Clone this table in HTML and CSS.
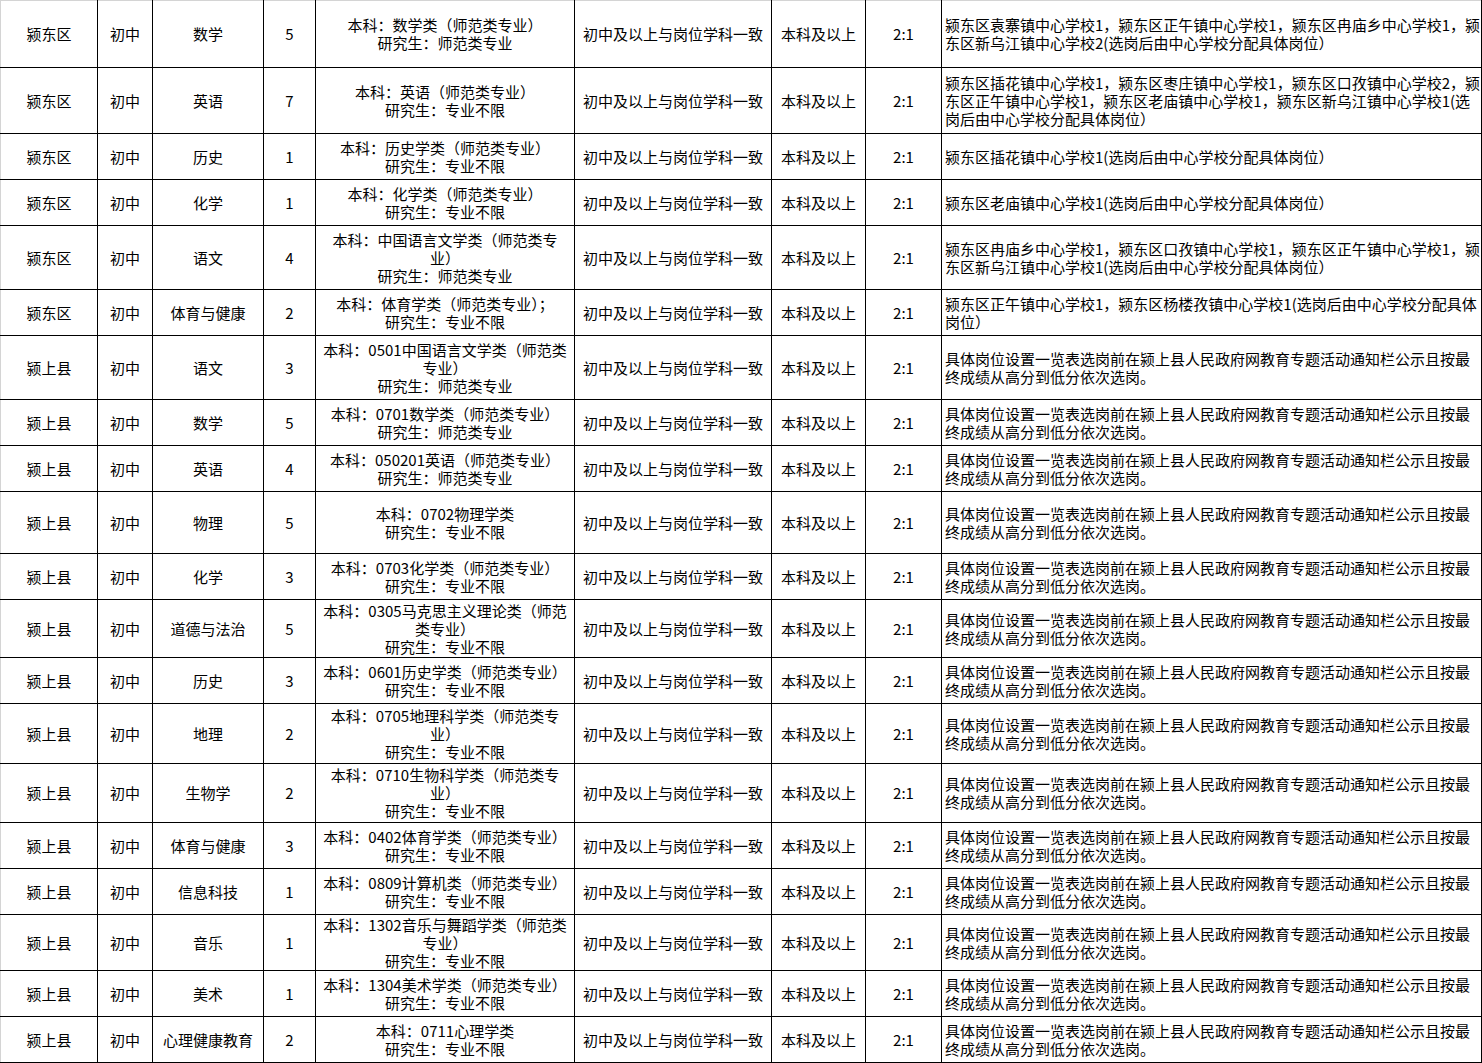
FILE: index.html
```html
<!DOCTYPE html>
<html lang="zh-CN">
<head>
<meta charset="utf-8">
<title>岗位表</title>
<link rel="stylesheet" href="styles.css">
</head>
<body>
<table class="sheet">
<colgroup>
<col class="c1"><col class="c2"><col class="c3"><col class="c4"><col class="c5"><col class="c6"><col class="c7"><col class="c8"><col class="c9">
</colgroup>
<tbody>
<tr class="h67"><td>颍东区</td><td>初中</td><td>数学</td><td>5</td><td>本科：数学类（师范类专业）<br>研究生：师范类专业</td><td>初中及以上与岗位学科一致</td><td>本科及以上</td><td>2:1</td><td class="note">颍东区袁寨镇中心学校1，颍东区正午镇中心学校1，颍东区冉庙乡中心学校1，颍<br>东区新乌江镇中心学校2(选岗后由中心学校分配具体岗位）</td></tr>
<tr class="h66"><td>颍东区</td><td>初中</td><td>英语</td><td>7</td><td>本科：英语（师范类专业）<br>研究生：专业不限</td><td>初中及以上与岗位学科一致</td><td>本科及以上</td><td>2:1</td><td class="note">颍东区插花镇中心学校1，颍东区枣庄镇中心学校1，颍东区口孜镇中心学校2，颍<br>东区正午镇中心学校1，颍东区老庙镇中心学校1，颍东区新乌江镇中心学校1(选<br>岗后由中心学校分配具体岗位）</td></tr>
<tr class="h46"><td>颍东区</td><td>初中</td><td>历史</td><td>1</td><td>本科：历史学类（师范类专业）<br>研究生：专业不限</td><td>初中及以上与岗位学科一致</td><td>本科及以上</td><td>2:1</td><td class="note">颍东区插花镇中心学校1(选岗后由中心学校分配具体岗位）</td></tr>
<tr class="h46"><td>颍东区</td><td>初中</td><td>化学</td><td>1</td><td>本科：化学类（师范类专业）<br>研究生：专业不限</td><td>初中及以上与岗位学科一致</td><td>本科及以上</td><td>2:1</td><td class="note">颍东区老庙镇中心学校1(选岗后由中心学校分配具体岗位）</td></tr>
<tr class="h64"><td>颍东区</td><td>初中</td><td>语文</td><td>4</td><td>本科：中国语言文学类（师范类专<br>业）<br>研究生：师范类专业</td><td>初中及以上与岗位学科一致</td><td>本科及以上</td><td>2:1</td><td class="note">颍东区冉庙乡中心学校1，颍东区口孜镇中心学校1，颍东区正午镇中心学校1，颍<br>东区新乌江镇中心学校1(选岗后由中心学校分配具体岗位）</td></tr>
<tr class="h46"><td>颍东区</td><td>初中</td><td>体育与健康</td><td>2</td><td>本科：体育学类（师范类专业）；<br>研究生：专业不限</td><td>初中及以上与岗位学科一致</td><td>本科及以上</td><td>2:1</td><td class="note">颍东区正午镇中心学校1，颍东区杨楼孜镇中心学校1(选岗后由中心学校分配具体<br>岗位）</td></tr>
<tr class="h64"><td>颍上县</td><td>初中</td><td>语文</td><td>3</td><td>本科：0501中国语言文学类（师范类<br>专业）<br>研究生：师范类专业</td><td>初中及以上与岗位学科一致</td><td>本科及以上</td><td>2:1</td><td class="note">具体岗位设置一览表选岗前在颍上县人民政府网教育专题活动通知栏公示且按最<br>终成绩从高分到低分依次选岗。</td></tr>
<tr class="h46"><td>颍上县</td><td>初中</td><td>数学</td><td>5</td><td>本科：0701数学类（师范类专业）<br>研究生：师范类专业</td><td>初中及以上与岗位学科一致</td><td>本科及以上</td><td>2:1</td><td class="note">具体岗位设置一览表选岗前在颍上县人民政府网教育专题活动通知栏公示且按最<br>终成绩从高分到低分依次选岗。</td></tr>
<tr class="h46"><td>颍上县</td><td>初中</td><td>英语</td><td>4</td><td>本科：050201英语（师范类专业）<br>研究生：师范类专业</td><td>初中及以上与岗位学科一致</td><td>本科及以上</td><td>2:1</td><td class="note">具体岗位设置一览表选岗前在颍上县人民政府网教育专题活动通知栏公示且按最<br>终成绩从高分到低分依次选岗。</td></tr>
<tr class="h62"><td>颍上县</td><td>初中</td><td>物理</td><td>5</td><td>本科：0702物理学类<br>研究生：专业不限</td><td>初中及以上与岗位学科一致</td><td>本科及以上</td><td>2:1</td><td class="note">具体岗位设置一览表选岗前在颍上县人民政府网教育专题活动通知栏公示且按最<br>终成绩从高分到低分依次选岗。</td></tr>
<tr class="h46"><td>颍上县</td><td>初中</td><td>化学</td><td>3</td><td>本科：0703化学类（师范类专业）<br>研究生：专业不限</td><td>初中及以上与岗位学科一致</td><td>本科及以上</td><td>2:1</td><td class="note">具体岗位设置一览表选岗前在颍上县人民政府网教育专题活动通知栏公示且按最<br>终成绩从高分到低分依次选岗。</td></tr>
<tr class="h58"><td>颍上县</td><td>初中</td><td>道德与法治</td><td>5</td><td>本科：0305马克思主义理论类（师范<br>类专业）<br>研究生：专业不限</td><td>初中及以上与岗位学科一致</td><td>本科及以上</td><td>2:1</td><td class="note">具体岗位设置一览表选岗前在颍上县人民政府网教育专题活动通知栏公示且按最<br>终成绩从高分到低分依次选岗。</td></tr>
<tr class="h46"><td>颍上县</td><td>初中</td><td>历史</td><td>3</td><td>本科：0601历史学类（师范类专业）<br>研究生：专业不限</td><td>初中及以上与岗位学科一致</td><td>本科及以上</td><td>2:1</td><td class="note">具体岗位设置一览表选岗前在颍上县人民政府网教育专题活动通知栏公示且按最<br>终成绩从高分到低分依次选岗。</td></tr>
<tr class="h60"><td>颍上县</td><td>初中</td><td>地理</td><td>2</td><td>本科：0705地理科学类（师范类专<br>业）<br>研究生：专业不限</td><td>初中及以上与岗位学科一致</td><td>本科及以上</td><td>2:1</td><td class="note">具体岗位设置一览表选岗前在颍上县人民政府网教育专题活动通知栏公示且按最<br>终成绩从高分到低分依次选岗。</td></tr>
<tr class="h59"><td>颍上县</td><td>初中</td><td>生物学</td><td>2</td><td>本科：0710生物科学类（师范类专<br>业）<br>研究生：专业不限</td><td>初中及以上与岗位学科一致</td><td>本科及以上</td><td>2:1</td><td class="note">具体岗位设置一览表选岗前在颍上县人民政府网教育专题活动通知栏公示且按最<br>终成绩从高分到低分依次选岗。</td></tr>
<tr class="h46"><td>颍上县</td><td>初中</td><td>体育与健康</td><td>3</td><td>本科：0402体育学类（师范类专业）<br>研究生：专业不限</td><td>初中及以上与岗位学科一致</td><td>本科及以上</td><td>2:1</td><td class="note">具体岗位设置一览表选岗前在颍上县人民政府网教育专题活动通知栏公示且按最<br>终成绩从高分到低分依次选岗。</td></tr>
<tr class="h46"><td>颍上县</td><td>初中</td><td>信息科技</td><td>1</td><td>本科：0809计算机类（师范类专业）<br>研究生：专业不限</td><td>初中及以上与岗位学科一致</td><td>本科及以上</td><td>2:1</td><td class="note">具体岗位设置一览表选岗前在颍上县人民政府网教育专题活动通知栏公示且按最<br>终成绩从高分到低分依次选岗。</td></tr>
<tr class="h56"><td>颍上县</td><td>初中</td><td>音乐</td><td>1</td><td>本科：1302音乐与舞蹈学类（师范类<br>专业）<br>研究生：专业不限</td><td>初中及以上与岗位学科一致</td><td>本科及以上</td><td>2:1</td><td class="note">具体岗位设置一览表选岗前在颍上县人民政府网教育专题活动通知栏公示且按最<br>终成绩从高分到低分依次选岗。</td></tr>
<tr class="h46"><td>颍上县</td><td>初中</td><td>美术</td><td>1</td><td>本科：1304美术学类（师范类专业）<br>研究生：专业不限</td><td>初中及以上与岗位学科一致</td><td>本科及以上</td><td>2:1</td><td class="note">具体岗位设置一览表选岗前在颍上县人民政府网教育专题活动通知栏公示且按最<br>终成绩从高分到低分依次选岗。</td></tr>
<tr class="h46"><td>颍上县</td><td>初中</td><td>心理健康教育</td><td>2</td><td>本科：0711心理学类<br>研究生：专业不限</td><td>初中及以上与岗位学科一致</td><td>本科及以上</td><td>2:1</td><td class="note">具体岗位设置一览表选岗前在颍上县人民政府网教育专题活动通知栏公示且按最<br>终成绩从高分到低分依次选岗。</td></tr>
</tbody>
</table>
</body>
</html>
```

FILE: styles.css
```css
html, body {
  margin: 0;
  padding: 0;
  background: #ffffff;
}

.sheet {
  border-collapse: collapse;
  table-layout: fixed;
  width: 1481px;
  font-family: "Noto Sans CJK SC", "Noto Sans", sans-serif;
  font-size: 15px;
  line-height: 18px;
  color: #000000;
}

.c1 { width: 97px; }
.c2 { width: 55px; }
.c3 { width: 111px; }
.c4 { width: 52px; }
.c5 { width: 259px; }
.c6 { width: 197px; }
.c7 { width: 94px; }
.c8 { width: 76px; }
.c9 { width: 540px; }

.sheet td {
  border: 1px solid #000000;
  padding: 0;
  text-align: center;
  vertical-align: middle;
  white-space: nowrap;
  overflow: hidden;
}

.sheet tr:first-child td {
  border-top: 1px solid #d4d4d4;
}

.sheet td:first-child {
  border-left: 1px solid #d4d4d4;
}

.sheet td.note {
  text-align: left;
  padding-left: 3px;
}

.h46 td { height: 45px; }
.h56 td { height: 55px; }
.h58 td { height: 57px; }
.h59 td { height: 58px; }
.h60 td { height: 59px; }
.h62 td { height: 61px; }
.h64 td { height: 63px; }
.h66 td { height: 65px; }
.h67 td { height: 66px; }
```
